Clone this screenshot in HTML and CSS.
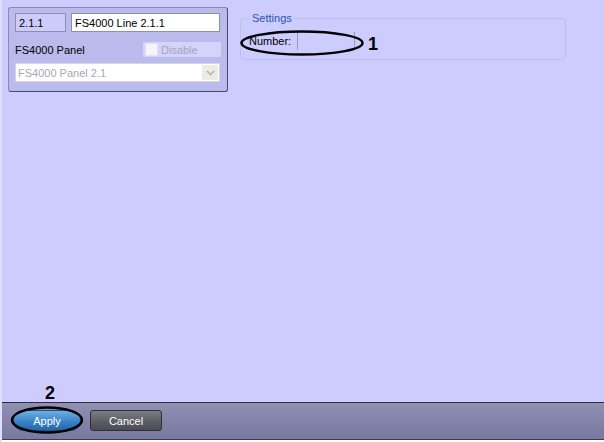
FILE: index.html
```html
<!DOCTYPE html>
<html>
<head>
<meta charset="utf-8">
<link rel="stylesheet" href="styles.css">
</head>
<body>
<div class="app">
  <main class="main">
    <section class="panel">
      <div class="row">
        <div class="id-box">2.1.1</div>
        <div class="name-input">FS4000 Line 2.1.1</div>
      </div>
      <div class="row row-mid">
        <span class="label">FS4000 Panel</span>
        <label class="disable">
          <span class="check"></span>
          <span>Disable</span>
        </label>
      </div>
      <div class="select">
        <span class="select-text">FS4000 Panel 2.1</span>
        <span class="select-btn">
          <svg width="9" height="6" viewBox="0 0 9 6"><path d="M1 1 L4.5 4.5 L8 1" fill="none" stroke="#b4b4a8" stroke-width="1.6"/></svg>
        </span>
      </div>
    </section>
    <fieldset class="settings">
      <legend>Settings</legend>
      <div class="field">
        <span class="field-label">Number:</span>
        <span class="field-input"></span>
      </div>
    </fieldset>
  </main>
  <footer class="footer">
    <button class="btn btn-apply">Apply</button>
    <button class="btn btn-cancel">Cancel</button>
  </footer>
  <div class="strip"></div>

  <svg class="mark mark-1" width="128" height="30" viewBox="0 0 128 30">
    <ellipse cx="62" cy="13" rx="60.5" ry="11.5" fill="none" stroke="#000" stroke-width="2.5"/>
  </svg>
  <span class="num num-1">1</span>
  <svg class="mark mark-2" width="76" height="30" viewBox="0 0 76 30">
    <ellipse cx="37" cy="14" rx="35" ry="12.5" fill="none" stroke="#000" stroke-width="2.5"/>
  </svg>
  <span class="num num-2">2</span>
</div>
</body>
</html>
```
FILE: styles.css
```css
html, body {
  margin: 0;
  padding: 0;
}
body {
  width: 604px;
  height: 442px;
  overflow: hidden;
  background: #ccccff;
  font-family: "Liberation Sans", Arial, sans-serif;
  font-size: 11px;
  color: #000;
}
.app {
  position: relative;
  width: 604px;
  height: 442px;
  display: flex;
  flex-direction: column;
  box-sizing: border-box;
  border-left: 2px solid #dedeff;
}
.main {
  flex: 1;
  display: flex;
  align-items: flex-start;
  padding: 7px 0 0 6px;
  gap: 12px;
}
.panel {
  width: 220px;
  height: 85px;
  box-sizing: border-box;
  background: #babaec;
  border: 1px solid #8a8aa8;
  border-right-color: #4a4a66;
  border-bottom-color: #4a4a66;
  border-radius: 3px;
  padding: 5px 7px 0 6px;
  display: flex;
  flex-direction: column;
}
.row {
  display: flex;
  gap: 5px;
  height: 19px;
}
.id-box {
  width: 51px;
  box-sizing: border-box;
  background: #ccccfc;
  border: 1px solid #8f8fa8;
  padding: 3px 0 0 3px;
}
.name-input {
  flex: 1;
  box-sizing: border-box;
  background: #fff;
  border: 1px solid #8f8fa8;
  padding: 3px 0 0 3px;
}
.row-mid {
  margin-top: 10px;
  height: 15px;
  justify-content: space-between;
  align-items: center;
}
.label {
  padding-top: 1px;
}
.disable {
  width: 78px;
  height: 15px;
  background: #d3d3fc;
  display: flex;
  align-items: center;
  gap: 3px;
  color: #a4a4b8;
  padding-left: 2px;
  box-sizing: border-box;
  margin-right: -1px;
}
.check {
  width: 13px;
  height: 13px;
  background: #f4f4fa;
  box-sizing: border-box;
  border: 1px solid #e2e2ee;
}
.select {
  margin-top: 6px;
  height: 19px;
  box-sizing: border-box;
  background: #fff;
  border: 1px solid #d6d6e2;
  display: flex;
  align-items: center;
  color: #a8a8b6;
}
.select-text {
  flex: 1;
  padding-left: 2px;
}
.select-btn {
  width: 16px;
  height: 15px;
  margin-right: 1px;
  background: #ecece6;
  display: flex;
  align-items: center;
  justify-content: center;
}
.settings {
  margin: 5px 0 0 0;
  width: 326px;
  height: 48px;
  box-sizing: border-box;
  border: 1px solid #c0c0e6;
  border-radius: 4px;
  padding: 6px 0 0 6px;
  min-width: 0;
}
.settings legend {
  color: #2a55b0;
  padding: 0 2px;
  margin-left: 3px;
  line-height: 12px;
}
.field {
  display: flex;
  height: 18px;
  margin-top: 2px;
}
.field-label {
  padding: 3px 6px 0 2px;
}
.field-input {
  width: 58px;
  box-sizing: border-box;
  border-left: 1px solid #9a9ab4;
  border-right: 1px solid #9a9ab4;
}
.footer {
  height: 29px;
  border-top: 1px solid #2c2c3c;
  border-bottom: 1px solid #3c3c4c;
  background: linear-gradient(#9090b2, #7878a0);
  display: flex;
  align-items: flex-start;
  gap: 9px;
  padding: 7px 0 0 11px;
  box-sizing: content-box;
}
.btn {
  height: 21px;
  font-family: "Liberation Sans", Arial, sans-serif;
  font-size: 11px;
  color: #fff;
  padding: 0;
  margin: 0;
}
.btn-apply {
  width: 68px;
  border: 1px solid #24507e;
  border-radius: 10px;
  background: linear-gradient(#6eb0e4, #3c82c6 55%, #2566aa);
}
.btn-cancel {
  width: 72px;
  border: 1px solid #2e2e36;
  border-radius: 3px;
  background: linear-gradient(#7c7c84, #5a5a62 60%, #4c4c54);
}
.strip {
  height: 2px;
  background: #fff;
}
.mark {
  position: absolute;
}
.mark-1 {
  left: 238px;
  top: 30px;
}
.mark-2 {
  left: 8px;
  top: 406px;
}
.num {
  position: absolute;
  font-family: "Liberation Sans", Arial, sans-serif;
  font-weight: bold;
  font-size: 18px;
  line-height: 18px;
}
.num-1 {
  left: 366px;
  top: 35px;
}
.num-2 {
  left: 43px;
  top: 384px;
}
```
